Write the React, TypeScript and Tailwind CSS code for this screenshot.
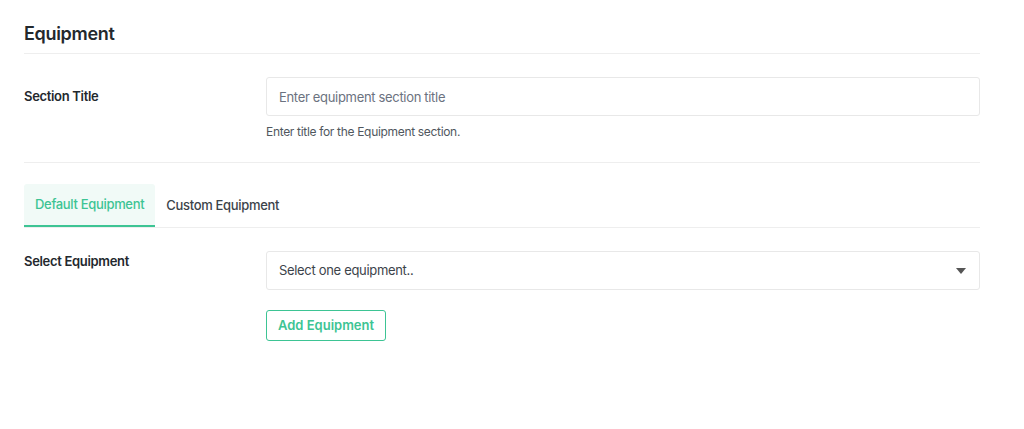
const App = () => {
  return (
    <div className="min-h-[429px] bg-white px-6 pt-[23px] font-['Inter',sans-serif] tracking-[-0.02em] text-[#23282d]">
      <div className="w-[956px]">
        <h2 className="pb-[8px] text-[18px] leading-[22px] font-semibold border-b border-[#eeeeee]">
          Equipment
        </h2>

        <div className="flex pt-[23px] pb-[22px] border-b border-[#eeeeee]">
          <label className="w-[242px] pt-[11px] text-[13px] leading-[16px] font-semibold">
            Section Title
          </label>
          <div className="flex-1">
            <input
              type="text"
              placeholder="Enter equipment section title"
              className="block w-full h-[39px] px-[12px] border border-[#e8e8e8] rounded-[3px] text-[13px] placeholder:text-[#6b7280] focus:outline-none"
            />
            <p className="mt-[8px] text-[12px] leading-[16px] text-[#50575e]">
              Enter title for the Equipment section.
            </p>
          </div>
        </div>

        <div className="flex mt-[21px] border-b border-[#eeeeee]">
          <button className="h-[43px] px-[11px] bg-[#f1faf7] border-b-2 border-[#3dc494] rounded-t-[3px] text-[13px] font-medium text-[#3dc494]">
            Default Equipment
          </button>
          <button className="h-[43px] px-[11px] text-[13px] font-medium text-[#3c434a]">
            Custom Equipment
          </button>
        </div>

        <div className="flex pt-[23px]">
          <label className="w-[242px] pt-[2px] text-[13px] leading-[16px] font-semibold">
            Select Equipment
          </label>
          <div className="flex-1">
            <div className="flex items-center justify-between h-[39px] px-[12px] border border-[#e8e8e8] rounded-[3px] text-[13px] text-[#3c434a]">
              <span>Select one equipment..</span>
              <svg width="10" height="6" viewBox="0 0 10 6" className="mr-[1px]">
                <path d="M0 0h10L5 6z" fill="#555" />
              </svg>
            </div>
            <button className="mt-[20px] h-[31px] w-[120px] border border-[#3dc494] rounded-[3px] text-[13px] font-semibold tracking-normal text-[#3dc494]">
              Add Equipment
            </button>
          </div>
        </div>
      </div>
    </div>
  );
};

export default App;
